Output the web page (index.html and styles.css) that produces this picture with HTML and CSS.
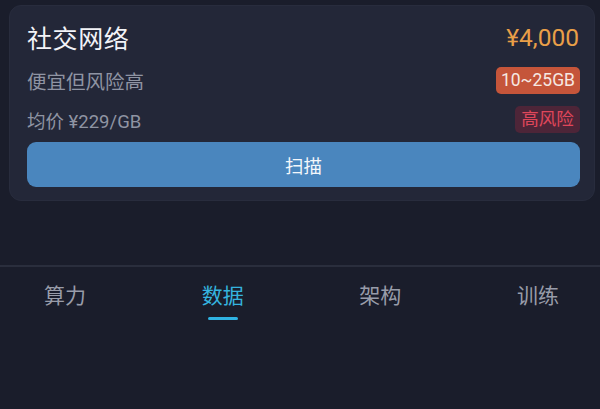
FILE: index.html
```html
<!DOCTYPE html>
<html lang="zh-CN">
<head>
<meta charset="utf-8">
<title>数据</title>
<link rel="stylesheet" href="styles.css">
</head>
<body>
<div class="page">
  <div class="card">
    <div class="row row-title">
      <span class="title">社交网络</span>
      <span class="price">¥4,000</span>
    </div>
    <div class="row row-sub">
      <span class="sub">便宜但风险高</span>
      <span class="badge badge-size">10~25GB</span>
    </div>
    <div class="row row-avg">
      <span class="avg">均价 ¥229/GB</span>
      <span class="badge badge-risk">高风险</span>
    </div>
    <button class="scan">扫描</button>
  </div>
</div>
<nav class="tabs">
  <div class="tab"><span class="tab-label">算力</span></div>
  <div class="tab active"><span class="tab-label">数据</span><span class="tab-bar"></span></div>
  <div class="tab"><span class="tab-label">架构</span></div>
  <div class="tab"><span class="tab-label">训练</span></div>
</nav>
</body>
</html>
```

FILE: styles.css
```css
html, body {
  margin: 0;
  padding: 0;
  background: #1a1d2b;
  height: 100%;
}
body {
  font-family: Roboto, "Noto Sans CJK SC", sans-serif;
  color: #eef0f5;
}
.page {
  padding: 5px 5px 0 9px;
}
.card {
  background: #232738;
  border: 1px solid #282c3d;
  border-radius: 12px;
  padding: 15px 14px 13px 17px;
  display: flex;
  flex-direction: column;
}
.row {
  display: flex;
  justify-content: space-between;
  align-items: center;
}
.row-title {
  height: 32px;
}
.title {
  font-size: 25px;
  color: #f2f3f7;
  letter-spacing: 0.6px;
}
.price {
  font-size: 24.5px;
  color: #e99f48;
  margin-right: 1px;
}
.row-sub {
  margin-top: 14px;
  height: 27px;
}
.sub {
  font-size: 19.5px;
  color: #8f94a3;
}
.row-avg {
  margin-top: 12px;
  height: 27px;
}
.avg {
  font-size: 18.5px;
  color: #8f94a3;
}
.badge {
  height: 27px;
  line-height: 27px;
  border-radius: 5px;
  font-size: 17.5px;
  box-sizing: border-box;
  text-align: center;
}
.badge-size {
  background: #c5553a;
  color: #f6e8e2;
  width: 84px;
}
.badge-risk {
  background: #4d2538;
  color: #e0475b;
  width: 65px;
}
.scan {
  margin-top: 9px;
  height: 45px;
  border: none;
  border-radius: 9px;
  background: #4a86be;
  color: #f4f7fb;
  font-family: Roboto, "Noto Sans CJK SC", sans-serif;
  font-size: 18.5px;
  width: 100%;
  cursor: pointer;
}
.tabs {
  margin-top: 64px;
  border-top: 2px solid #2a2e3d;
  display: flex;
  justify-content: space-between;
  padding: 15px 41px 0 44px;
}
.tab {
  display: flex;
  flex-direction: column;
  align-items: center;
}
.tab-label {
  font-size: 21px;
  line-height: 28px;
  color: #989ca9;
}
.tab.active .tab-label {
  color: #35b3df;
}
.tab-bar {
  margin-top: 7px;
  width: 30px;
  height: 3px;
  border-radius: 2px;
  background: #2fb2e2;
}
```
